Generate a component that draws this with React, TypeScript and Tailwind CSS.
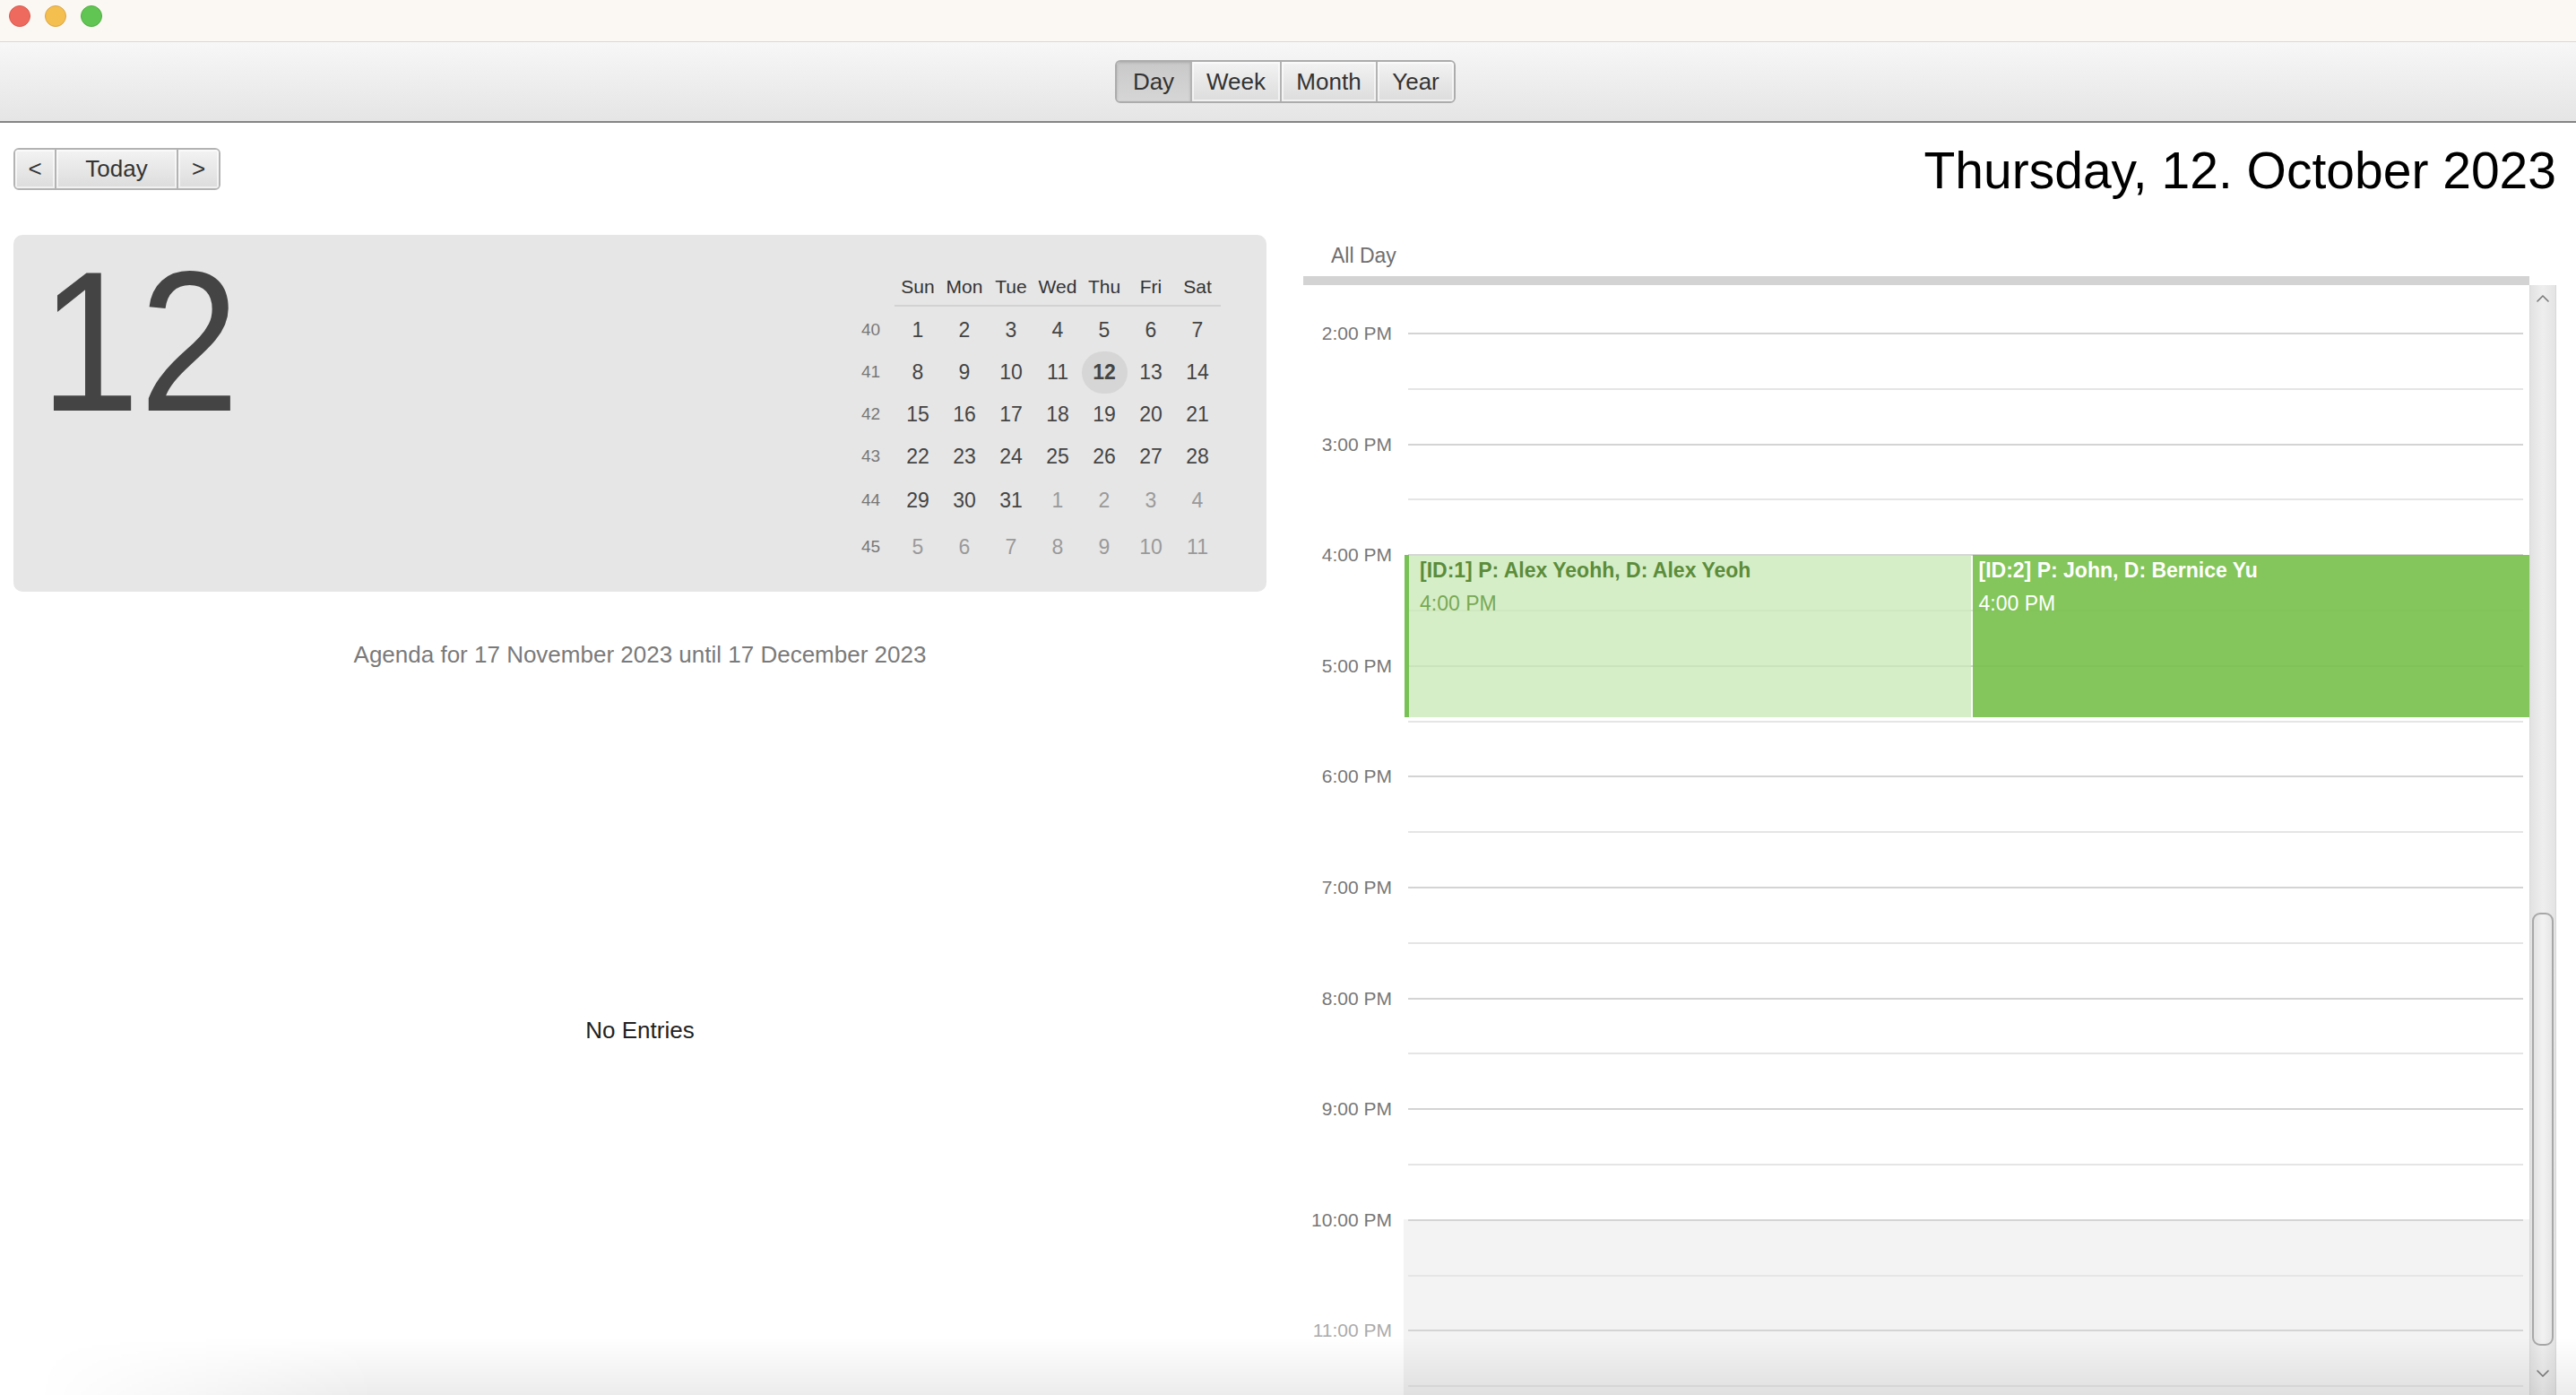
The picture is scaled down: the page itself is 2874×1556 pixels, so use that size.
import React from "react";

const FONT = "font-['Liberation_Sans',Arial,Helvetica,sans-serif]";

const weeks: { wk: number; days: { d: number; other?: boolean; today?: boolean }[]; h: string }[] = [
  { wk: 40, days: [1, 2, 3, 4, 5, 6, 7].map((d) => ({ d })), h: "h-[47px]" },
  { wk: 41, days: [8, 9, 10, 11, 12, 13, 14].map((d) => ({ d, today: d === 12 })), h: "h-[47px]" },
  { wk: 42, days: [15, 16, 17, 18, 19, 20, 21].map((d) => ({ d })), h: "h-[47px]" },
  { wk: 43, days: [22, 23, 24, 25, 26, 27, 28].map((d) => ({ d })), h: "h-[47px]" },
  {
    wk: 44,
    days: [
      { d: 29 },
      { d: 30 },
      { d: 31 },
      { d: 1, other: true },
      { d: 2, other: true },
      { d: 3, other: true },
      { d: 4, other: true },
    ],
    h: "h-[51px]",
  },
  { wk: 45, days: [5, 6, 7, 8, 9, 10, 11].map((d) => ({ d, other: true })), h: "h-[53px]" },
];

const hours = [
  "2:00 PM",
  "3:00 PM",
  "4:00 PM",
  "5:00 PM",
  "6:00 PM",
  "7:00 PM",
  "8:00 PM",
  "9:00 PM",
  "10:00 PM",
  "11:00 PM",
];

function SegButton({
  label,
  w,
  selected,
  first,
}: {
  label: string;
  w: string;
  selected?: boolean;
  first?: boolean;
}) {
  return (
    <div
      className={`${w} h-full flex items-center justify-center text-[26px] text-[#333] ${
        first ? "" : "border-l-2 border-[#b3b3b3]"
      } ${
        selected
          ? "bg-linear-to-b from-[#c9c9c9] to-[#d6d6d6] shadow-[inset_0_1px_3px_rgba(0,0,0,0.15)]"
          : "bg-linear-to-b from-[#f3f3f3] to-[#dcdcdc] shadow-[inset_0_0_0_2px_rgba(255,255,255,0.6)]"
      }`}
    >
      {label}
    </div>
  );
}

function Chevron({ up }: { up?: boolean }) {
  return (
    <svg width="16" height="10" viewBox="0 0 16 10" fill="none">
      <path
        d={up ? "M2 8 L8 2 L14 8" : "M2 2 L8 8 L14 2"}
        stroke="#7a7a7a"
        strokeWidth="1.6"
        strokeLinecap="round"
        strokeLinejoin="round"
      />
    </svg>
  );
}

export default function App() {
  return (
    <div className={`${FONT} relative w-[2874px] h-[1556px] overflow-hidden bg-white`}>
      {/* Title bar */}
      <div className="h-[47px] bg-[#fbf8f4] border-b border-[#d9d9d9] flex items-start pt-[6px] pl-[10px] gap-[16px]">
        <div className="w-[24px] h-[24px] rounded-full bg-[#ee6a5f] border border-[#d75a4e]" />
        <div className="w-[24px] h-[24px] rounded-full bg-[#f5bf4f] border border-[#d9a544]" />
        <div className="w-[24px] h-[24px] rounded-full bg-[#61c554] border border-[#4fae3f]" />
      </div>

      {/* Toolbar */}
      <div className="h-[90px] bg-linear-to-b from-[#f7f7f7] to-[#e5e5e5] border-b-2 border-[#858585] flex items-center justify-center">
        <div className="flex h-[48px] rounded-[6px] border-2 border-[#acacac] overflow-hidden ml-[-6px]">
          <SegButton label="Day" w="w-[82px]" selected first />
          <SegButton label="Week" w="w-[100px]" />
          <SegButton label="Month" w="w-[107px]" />
          <SegButton label="Year" w="w-[87px]" />
        </div>
      </div>

      {/* Content */}
      <div className="pl-[15px] pr-[22px]">
        {/* Header row */}
        <div className="mt-[28px] h-[47px] flex items-center justify-between">
          <div className="flex h-[47px] rounded-[6px] border-2 border-[#b3b3b3] overflow-hidden">
            <div className="w-[44px] flex items-center justify-center text-[26px] text-[#333] bg-linear-to-b from-[#f3f3f3] to-[#dcdcdc] shadow-[inset_0_0_0_2px_rgba(255,255,255,0.6)]">
              &lt;
            </div>
            <div className="w-[136px] flex items-center justify-center text-[26px] text-[#333] border-l-2 border-[#b3b3b3] bg-linear-to-b from-[#f3f3f3] to-[#dcdcdc] shadow-[inset_0_0_0_2px_rgba(255,255,255,0.6)]">
              Today
            </div>
            <div className="w-[47px] flex items-center justify-center text-[26px] text-[#333] border-l-2 border-[#b3b3b3] bg-linear-to-b from-[#f3f3f3] to-[#dcdcdc] shadow-[inset_0_0_0_2px_rgba(255,255,255,0.6)]">
              &gt;
            </div>
          </div>
          <div className="text-[57px] leading-none text-black mt-[3px]">Thursday, 12. October 2023</div>
        </div>

        {/* Columns */}
        <div className="mt-[50px] grid grid-cols-2 gap-[41px]">
          {/* Left column */}
          <div className="flex flex-col">
            <div className="h-[398px] rounded-[10px] bg-[#e6e6e6] flex justify-between">
              <div className="pl-[33px] pt-[8px] text-[222px] leading-none text-[#444] origin-left scale-x-[0.9]">
                12
              </div>
              <div className="mt-[40px] mr-[51px] flex flex-col">
                <div className="flex h-[36px] items-center">
                  <div className="w-[47px]" />
                  <div className="flex">
                    {["Sun", "Mon", "Tue", "Wed", "Thu", "Fri", "Sat"].map((d) => (
                      <div key={d} className="w-[52px] text-center text-[21px] text-[#333]">
                        {d}
                      </div>
                    ))}
                  </div>
                </div>
                <div className="flex">
                  <div className="w-[47px]" />
                  <div className="w-[364px] h-[2px] bg-[#d2d2d2] mt-[2px]" />
                </div>
                <div className="mt-[3px] flex flex-col">
                  {weeks.map((w) => (
                    <div key={w.wk} className={`flex items-center ${w.h}`}>
                      <div className="w-[47px] text-center text-[19px] text-[#777] pr-[6px]">{w.wk}</div>
                      {w.days.map((day, i) => (
                        <div key={i} className="w-[52px] flex items-center justify-center">
                          {day.today ? (
                            <div className="w-[51px] h-[47px] rounded-full bg-[#d6d6d6] flex items-center justify-center text-[23px] font-bold text-[#444]">
                              {day.d}
                            </div>
                          ) : (
                            <span className={`text-[23px] ${day.other ? "text-[#9a9a9a]" : "text-[#444]"}`}>
                              {day.d}
                            </span>
                          )}
                        </div>
                      ))}
                    </div>
                  ))}
                </div>
              </div>
            </div>
            <div className="mt-[57px] text-center text-[26px] text-[#7a7a7a] leading-[26px]">
              Agenda for 17 November 2023 until 17 December 2023
            </div>
            <div className="mt-[393px] text-center text-[26px] text-[#222] leading-[26px]">No Entries</div>
          </div>

          {/* Right column */}
          <div className="flex flex-col">
            <div className="h-[46px] flex items-center pl-[31px] text-[23px] text-[#6f6f6f]">All Day</div>
            <div className="h-[10px] mr-[30px] bg-[#d3d3d3]" />
            <div className="flex h-[1238px]">
              <div className="relative flex-1 overflow-hidden">
                <div className="h-[53px]" />
                {hours.map((h, i) => {
                  const after = i >= 8;
                  return (
                    <div key={h} className="flex h-[123.6px]">
                      <div className="w-[112px] relative">
                        <div
                          className={`absolute right-[13px] top-0 -translate-y-1/2 text-[21px] leading-none whitespace-nowrap ${
                            i === 9 ? "text-[#ababab]" : "text-[#777]"
                          }`}
                        >
                          {h}
                        </div>
                      </div>
                      <div className={`flex-1 flex flex-col ${after ? "bg-[#f3f3f3]" : ""}`}>
                        <div className="h-[61.8px] mx-[5px] mr-[7px] border-t-2 border-[#d4d4d4]" />
                        <div className="h-[61.8px] mx-[5px] mr-[7px] border-t-2 border-[#e5e5e5]" />
                      </div>
                    </div>
                  );
                })}

                {/* Events */}
                <div className="absolute left-[113px] right-0 top-[301px] h-[181px] flex gap-[2px]">
                  <div className="flex-1 border-l-[5px] border-[#78c255] bg-[#c8e8b6]/75 pl-[12px] pt-[4px]">
                    <div className="text-[23px] font-bold text-[#5b8c3a] leading-[26px]">
                      [ID:1] P: Alex Yeohh, D: Alex Yeoh
                    </div>
                    <div className="mt-[11px] text-[23px] text-[#78a955] leading-[26px]">4:00 PM</div>
                  </div>
                  <div className="flex-1 bg-[#77c049]/90 pl-[7px] pt-[4px]">
                    <div className="text-[23px] font-bold text-white leading-[26px]">[ID:2] P: John, D: Bernice Yu</div>
                    <div className="mt-[11px] text-[23px] text-white leading-[26px]">4:00 PM</div>
                  </div>
                </div>
              </div>

              {/* Scrollbar */}
              <div className="w-[30px] flex flex-col items-center border-l border-r border-[#d8d8d8] bg-linear-to-r from-[#e2e2e2] via-[#eeeeee] to-[#e4e4e4]">
                <div className="h-[28px] flex items-center justify-center pt-[1px]">
                  <Chevron up />
                </div>
                <div className="mt-[672px] w-[24px] h-[483px] rounded-[9px] border-2 border-[#a8a8a8] bg-linear-to-r from-[#e3e3e3] via-[#f2f2f2] to-[#e6e6e6]" />
                <div className="mt-[26px] flex items-center justify-center">
                  <Chevron />
                </div>
              </div>
            </div>
          </div>
        </div>
      </div>

      {/* Bottom window shadow fade */}
      <div className="pointer-events-none absolute bottom-0 left-0 right-0 h-[64px] bg-linear-to-b from-transparent to-black/[0.075] [mask-image:linear-gradient(to_right,transparent_40px,black_420px)]" />
    </div>
  );
}
